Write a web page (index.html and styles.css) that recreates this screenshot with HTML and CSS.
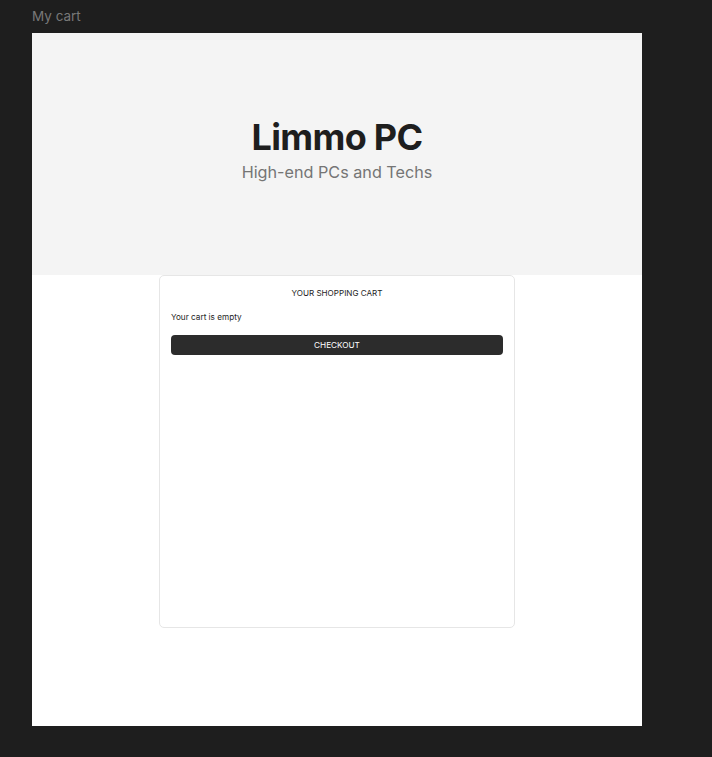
FILE: index.html
```html
<!DOCTYPE html>
<html>
<head>
<meta charset="utf-8">
<link rel="stylesheet" href="styles.css">
</head>
<body>
<div class="label">My cart</div>
<main class="frame">
  <header class="hero">
    <h1 class="title">Limmo PC</h1>
    <p class="subtitle">High-end PCs and Techs</p>
  </header>
  <section class="card">
    <h2 class="card-title">YOUR SHOPPING CART</h2>
    <p class="empty">Your cart is empty</p>
    <button class="checkout">CHECKOUT</button>
  </section>
</main>
</body>
</html>
```
FILE: styles.css
```css
html, body {
  margin: 0;
  padding: 0;
  background: #1e1e1e;
  font-family: Inter, "Noto Sans", sans-serif;
}
.label {
  height: 33px;
  box-sizing: border-box;
  padding: 8px 0 0 32px;
  font-size: 13.5px;
  line-height: 17px;
  color: #787878;
}
.frame {
  margin-left: 32px;
  width: 610px;
  height: 693px;
  background: #ffffff;
  display: flex;
  flex-direction: column;
  align-items: center;
}
.hero {
  align-self: stretch;
  height: 242px;
  background: #f4f4f4;
  display: flex;
  flex-direction: column;
  align-items: center;
  box-sizing: border-box;
  padding-top: 82px;
}
.title {
  margin: 0;
  font-size: 36px;
  font-weight: 700;
  line-height: 44px;
  letter-spacing: -0.7px;
  color: #1e1e1e;
}
.subtitle {
  margin: 3px 0 0;
  font-size: 16.2px;
  line-height: 20px;
  color: #757575;
}
.card {
  width: 356px;
  height: 353px;
  box-sizing: border-box;
  border: 1px solid #e6e6e6;
  border-radius: 5px;
  padding: 12px 11px;
  display: flex;
  flex-direction: column;
}
.card-title {
  margin: 0;
  text-align: center;
  font-size: 8.1px;
  font-weight: 400;
  line-height: 10px;
  color: #1e1e1e;
}
.empty {
  margin: 14px 0 0;
  font-size: 8.2px;
  line-height: 10px;
  color: #1e1e1e;
}
.checkout {
  margin-top: 13px;
  height: 20px;
  border: none;
  border-radius: 4px;
  background: #2c2c2c;
  color: #ffffff;
  font-family: Inter, "Noto Sans", sans-serif;
  font-size: 8.2px;
  line-height: 10px;
  padding: 0;
}
```
